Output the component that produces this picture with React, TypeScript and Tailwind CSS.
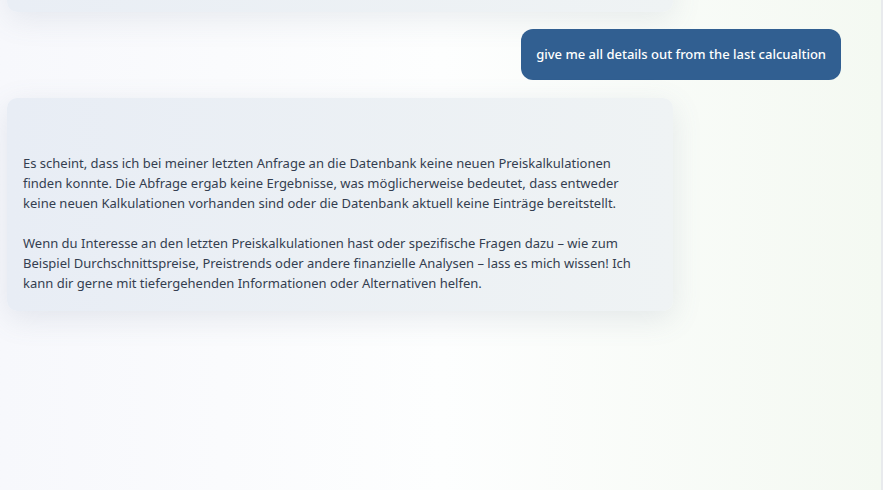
import React from "react";

export default function App() {
  return (
    <div
      className="relative flex h-[490px] w-[883px] overflow-hidden bg-gradient-to-r from-[#f7f8fc] via-[#fdfefe] to-[#f4f9f2]"
      style={{ fontFamily: '"Noto Sans", "Open Sans", sans-serif' }}
    >
      <div className="flex flex-1 flex-col">
        <div className="-mt-[40px] ml-[7px] h-[52px] w-[666px] rounded-[10px] bg-gradient-to-r from-[#e9eef5] to-[#eff3f4] shadow-[0_8px_30px_rgba(100,116,139,0.12)]" />
        <div className="mt-[17px] flex justify-end pr-[40px]">
          <div className="rounded-[12px] bg-[#315f91] px-[15px] py-[16px] text-[13px] font-medium leading-[19px] text-white">
            give me all details out from the last calcualtion
          </div>
        </div>
        <div className="ml-[7px] mt-[18px] w-[666px] rounded-[10px] bg-gradient-to-r from-[#e8edf5] to-[#eff3f4] pb-[18px] pl-4 pr-[34px] pt-[55px] text-[13px] leading-[20px] text-[#343e50] shadow-[0_8px_30px_rgba(100,116,139,0.14)]">
          <p>
            Es scheint, dass ich bei meiner letzten Anfrage an die Datenbank keine neuen Preiskalkulationen finden konnte. Die Abfrage ergab keine Ergebnisse, was möglicherweise bedeutet, dass entweder keine neuen Kalkulationen vorhanden sind oder die Datenbank aktuell keine Einträge bereitstellt.
          </p>
          <p className="mt-[20px]">
            Wenn du Interesse an den letzten Preiskalkulationen hast oder spezifische Fragen dazu – wie zum Beispiel Durchschnittspreise, Preistrends oder andere finanzielle Analysen – lass es mich wissen! Ich kann dir gerne mit tiefergehenden Informationen oder Alternativen helfen.
          </p>
        </div>
      </div>
      <div className="w-[2px] bg-[#e8eaed]" />
    </div>
  );
}
